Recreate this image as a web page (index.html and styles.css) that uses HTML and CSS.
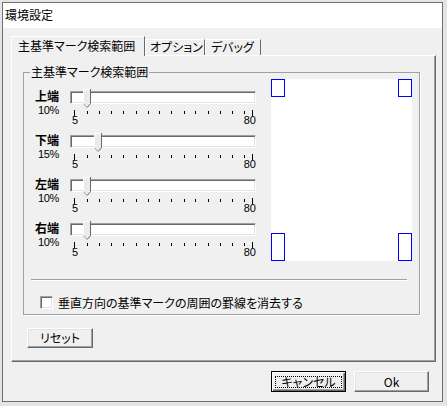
FILE: index.html
```html
<!DOCTYPE html>
<html lang="ja">
<head>
<meta charset="utf-8">
<title>環境設定</title>
<link rel="stylesheet" href="styles.css">
</head>
<body>
<svg class="defs" width="0" height="0" aria-hidden="true">
  <defs>
    <symbol id="ticks" viewBox="0 0 186 7">
      <path d="M4.5 0v6M17.5 1v3M29.5 1v3M41.5 1v3M53.5 1v3M66.5 1v3M78.5 1v3M89.5 1v3M101.5 1v3M114.5 1v3M125.5 1v3M138.5 1v3M150.5 1v3M162.5 1v3M174.5 1v3M182.5 0v6" stroke="#000" stroke-width="1" fill="none"/>
    </symbol>
    <symbol id="thumb" viewBox="0 0 8 19">
      <path d="M0 0h8v14.5l-4 4.5l-4-4.5z" fill="#ebebeb"/>
      <path d="M0.5 14.5V0.5H7" stroke="#fff" fill="none"/>
      <path d="M7.5 0v14.6L4 18.6" stroke="#696969" fill="none"/>
      <path d="M0.5 14.6L3.6 18.2" stroke="#a0a0a0" fill="none"/>
    </symbol>
  </defs>
</svg>
<div class="desk">
  <div class="window">
    <div class="titlebar">環境設定</div>
    <div class="client">
      <div class="tabs">
        <div class="tab active">主基準マーク検索範囲</div>
        <div class="tab t2">オプション</div>
        <div class="tab t3">デバッグ</div>
      </div>
      <div class="panel">
        <fieldset class="group">
          <legend>主基準マーク検索範囲</legend>
          <div class="group-main">
            <div class="sliders">
              <div class="srow">
                <div class="slabel"><b>上端</b><span class="pct">10%</span></div>
                <div class="slider">
                  <div class="track"><svg class="thumb" style="left:12px"><use href="#thumb"/></svg></div>
                  <svg class="ticks"><use href="#ticks"/></svg>
                  <div class="scale"><span>5</span><span>80</span></div>
                </div>
              </div>
              <div class="srow">
                <div class="slabel"><b>下端</b><span class="pct">15%</span></div>
                <div class="slider">
                  <div class="track"><svg class="thumb" style="left:23px"><use href="#thumb"/></svg></div>
                  <svg class="ticks"><use href="#ticks"/></svg>
                  <div class="scale"><span>5</span><span>80</span></div>
                </div>
              </div>
              <div class="srow">
                <div class="slabel"><b>左端</b><span class="pct">10%</span></div>
                <div class="slider">
                  <div class="track"><svg class="thumb" style="left:12px"><use href="#thumb"/></svg></div>
                  <svg class="ticks"><use href="#ticks"/></svg>
                  <div class="scale"><span>5</span><span>80</span></div>
                </div>
              </div>
              <div class="srow">
                <div class="slabel"><b>右端</b><span class="pct">10%</span></div>
                <div class="slider">
                  <div class="track"><svg class="thumb" style="left:12px"><use href="#thumb"/></svg></div>
                  <svg class="ticks"><use href="#ticks"/></svg>
                  <div class="scale"><span>5</span><span>80</span></div>
                </div>
              </div>
            </div>
            <div class="preview">
              <div class="prow"><span class="mk"></span><span class="mk"></span></div>
              <div class="prow"><span class="mk tall"></span><span class="mk tall"></span></div>
            </div>
          </div>
          <div class="sep"></div>
          <label class="check"><span class="cbox"></span>垂直方向の基準マークの周囲の罫線を消去する</label>
        </fieldset>
        <button class="btn reset">リセット</button>
      </div>
      <div class="footer">
        <button class="btn default"><span class="focus">キャンセル</span></button>
        <button class="btn ok">Ok</button>
      </div>
    </div>
  </div>
</div>
</body>
</html>
```

FILE: styles.css
```css
* { box-sizing: border-box; }
html, body { margin: 0; padding: 0; }
body {
  width: 447px;
  height: 406px;
  overflow: hidden;
  background: #e4e4e4;
  font-family: "Noto Sans CJK JP", "Liberation Sans", sans-serif;
  font-size: 12px;
  color: #000;
  font-feature-settings: "palt";
}
.defs { position: absolute; width: 0; height: 0; overflow: hidden; }

.desk { padding: 2px 0 0 2px; height: 406px; }
.window {
  width: 441px;
  height: 400px;
  border: 1px solid #707070;
  background: #f0f0f0;
  display: flex;
  flex-direction: column;
}
.titlebar {
  flex: none;
  height: 25px;
  background: #fff;
  padding-left: 2px;
  line-height: 23px;
}
.client {
  flex: 1;
  padding: 8px 6px 0 8px;
  display: flex;
  flex-direction: column;
}

/* tabs */
.tabs { display: flex; align-items: flex-end; height: 19px; flex: none; }
.tab {
  position: relative;
  height: 16px;
  border: 1px solid #fff;
  border-right-color: #696969;
  border-bottom: 0;
  line-height: 13px;
  white-space: nowrap;
}
.tab.active {
  height: 20px;
  margin-bottom: -1px;
  z-index: 1;
  background: #f0f0f0;
  width: 134px;
  padding: 1px 0 0 6px;
  line-height: 15px;
}
.tab.t2 { width: 60px; padding-left: 4px; }
.tab.t3 { width: 56px; padding-left: 5px; }

.panel {
  flex: none;
  height: 307px;
  border: 1px solid #fff;
  border-right-color: #696969;
  border-bottom-color: #696969;
  box-shadow: inset -1px -1px #a0a0a0;
  padding: 9px 0 0 11px;
}

/* group box */
.group {
  margin: 0;
  width: 397px;
  height: 250px;
  padding: 0 7px 0 11px;
  border: 1px solid #a0a0a0;
  box-shadow: 1px 1px 0 #fff;
  min-width: 0;
}
.group legend {
  margin-left: -5px;
  padding: 0 1px;
  line-height: 14px;
}
.group-main { display: flex; }
.sliders { width: 221px; padding-top: 10px; }
.srow { display: flex; height: 44px; }
.slabel { width: 35px; display: flex; flex-direction: column; align-items: flex-start; }
.slabel b { font-weight: 700; line-height: 14px; }
.pct {
  font-family: "Liberation Sans", sans-serif;
  font-size: 11px;
  line-height: 14px;
  padding-left: 3px;
  letter-spacing: -0.4px;
}
.slider { width: 186px; padding-top: 2px; }
.track {
  position: relative;
  height: 13px;
  background: #fff;
  border: 1px solid;
  border-color: #a0a0a0 #fff #fff #a0a0a0;
  box-shadow: inset 1px 1px #696969, inset -1px -1px #e3e3e3;
}
.thumb { position: absolute; top: -3px; width: 8px; height: 19px; }
.ticks { display: block; width: 186px; height: 7px; margin-top: 6px; }
.scale {
  display: flex;
  justify-content: space-between;
  font-family: "Liberation Sans", sans-serif;
  font-size: 11px;
  line-height: 10px;
  margin-top: -2px;
  padding-left: 2px;
}

.preview {
  width: 141px;
  height: 182px;
  margin-left: 15px;
  background: #fff;
  display: flex;
  flex-direction: column;
  justify-content: space-between;
}
.prow { display: flex; justify-content: space-between; }
.mk { width: 14px; height: 18px; border: 1px solid #0000ff; }
.mk.tall { height: 28px; }

.sep {
  width: 376px;
  height: 2px;
  margin: 14px 0 0 -4px;
  border-top: 1px solid #a0a0a0;
  border-bottom: 1px solid #fff;
}
.check {
  display: flex;
  align-items: center;
  height: 14px;
  margin-top: 14px;
  padding-left: 5px;
  white-space: nowrap;
}
.cbox {
  width: 13px;
  height: 13px;
  margin-right: 5px;
  background: #fff;
  border: 1px solid;
  border-color: #a0a0a0 #fff #fff #a0a0a0;
  box-shadow: inset 1px 1px #696969, inset -1px -1px #e3e3e3;
}

/* buttons */
.btn {
  display: block;
  font-family: "Noto Sans CJK JP", "Liberation Sans", sans-serif;
  font-size: 12px;
  font-feature-settings: "palt";
  color: #000;
  background: #f0f0f0;
  padding: 0;
  border: 1px solid;
  border-color: #fff #696969 #696969 #fff;
  box-shadow: inset -1px -1px #a0a0a0, inset 1px 1px #e3e3e3;
  line-height: 14px;
}
.reset { width: 66px; height: 20px; margin: 13px 0 0 4px; }
.footer {
  display: flex;
  justify-content: flex-end;
  gap: 8px;
  margin-top: 9px;
  padding-right: 7px;
}
.footer .btn { width: 75px; height: 21px; }
.btn.default {
  border-color: #000;
  box-shadow: inset 1px 1px #fff, inset -1px -1px #696969, inset -2px -2px #a0a0a0;
}
.focus {
  display: block;
  margin: 0 3px;
  height: 12px;
  border: 1px dotted #000;
  line-height: 10px;
}
```
